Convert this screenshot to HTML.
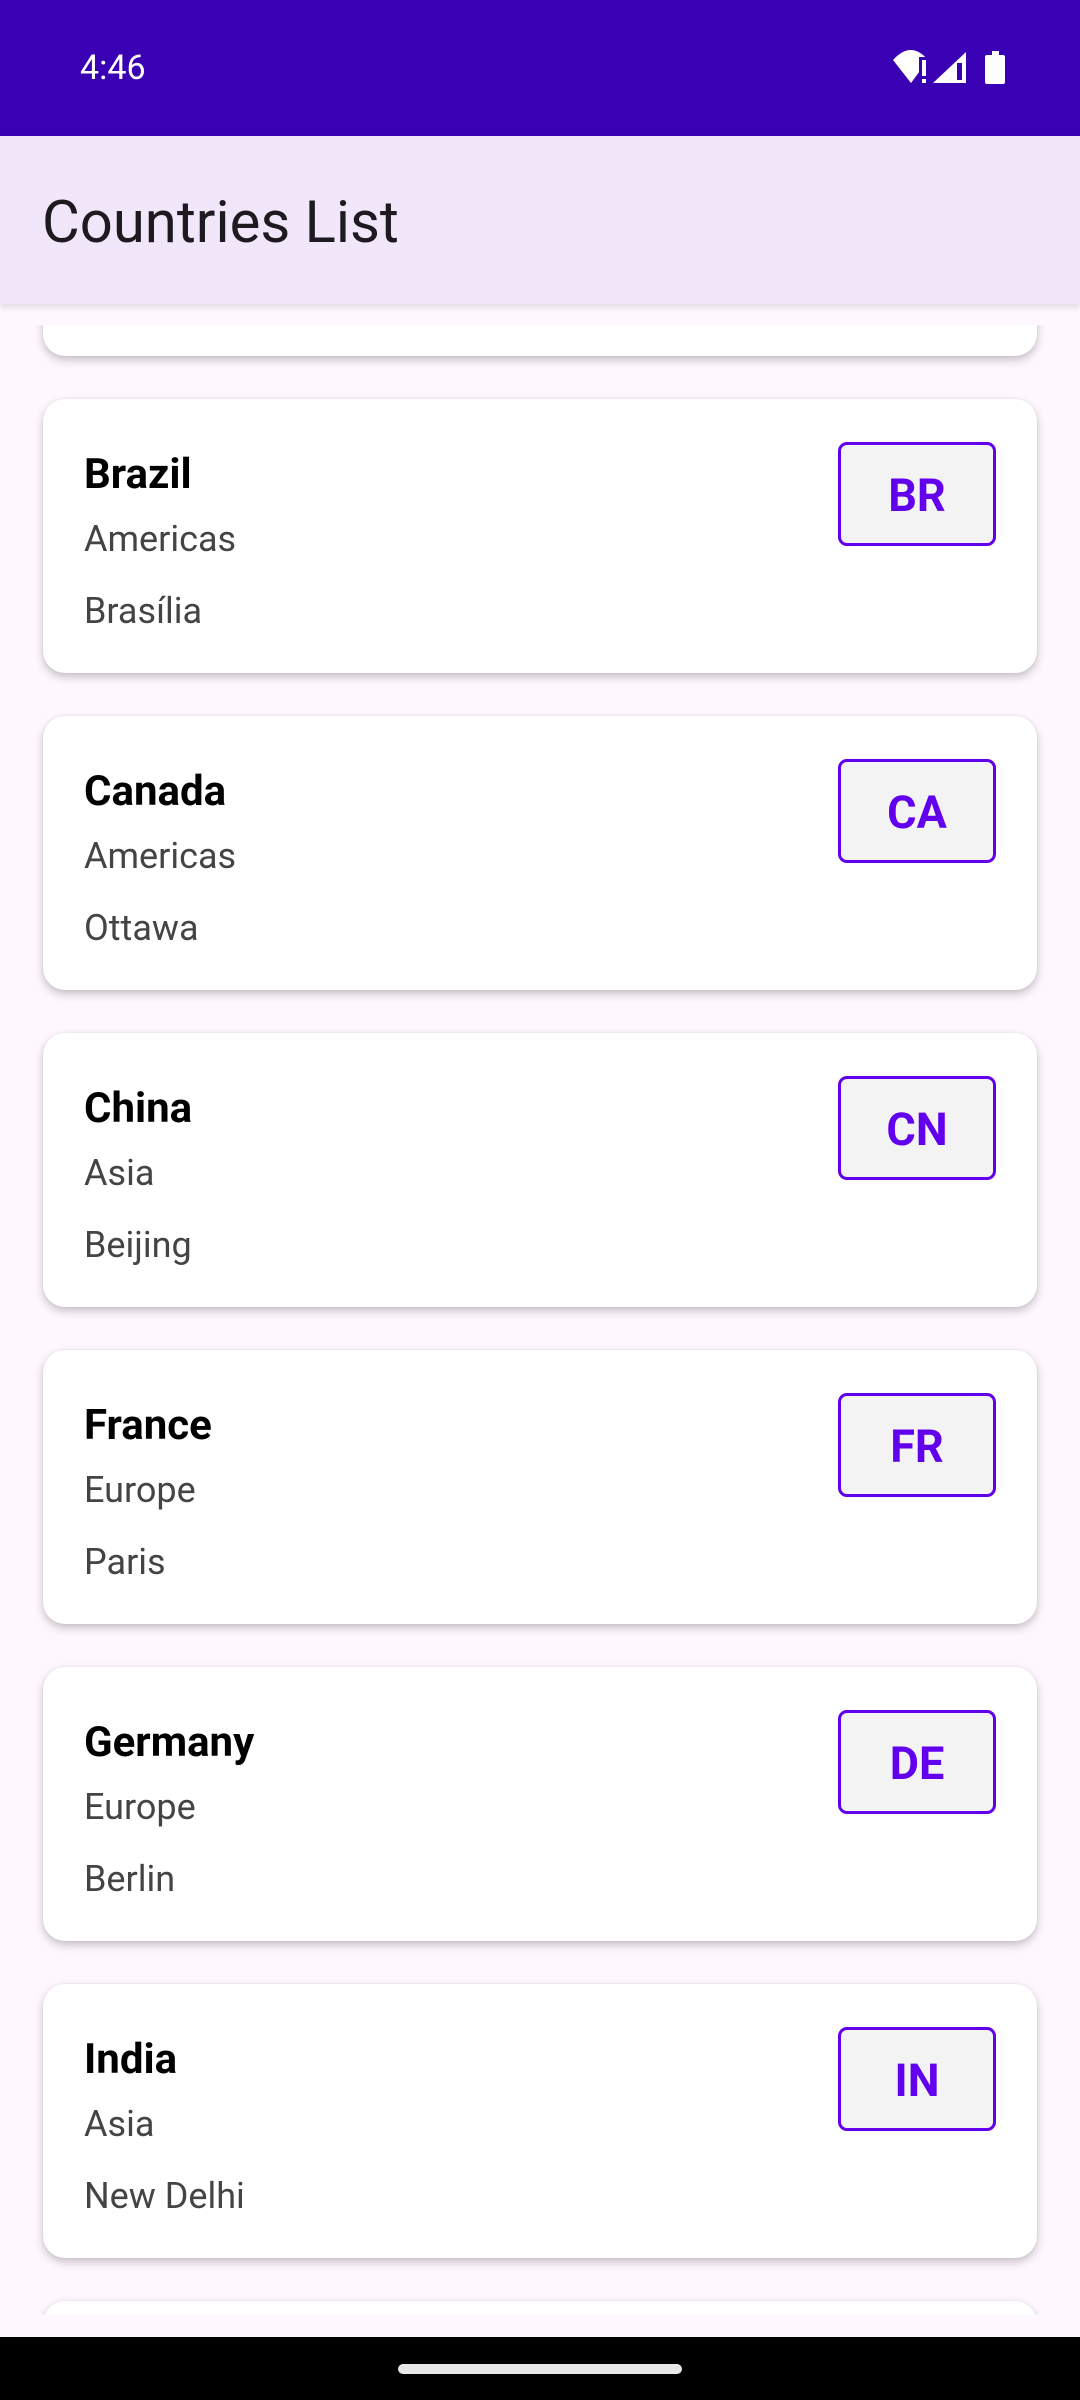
<!DOCTYPE html>
<html><head><meta charset="utf-8"><style>
*{margin:0;padding:0;box-sizing:border-box}
html,body{width:1080px;height:2400px;overflow:hidden}
body{background:#fef7fe;font-family:"Roboto","Liberation Sans",sans-serif;position:relative}
.sb{position:absolute;left:0;top:0;width:1080px;height:136px;background:#3a00b3}
.time{position:absolute;left:80px;top:48px;color:#fff;font-size:34px}
.ab{position:absolute;left:0;top:136px;width:1080px;height:168px;background:#f2e6fa;box-shadow:0 3px 6px rgba(0,0,0,0.12);z-index:5}
.ab span{position:absolute;left:42px;top:53px;font-size:58px;color:#1d1b20}
.list{position:absolute;left:0;top:325px;width:1080px;height:1990px;overflow:hidden}
.card{position:absolute;left:43px;width:994px;height:274px;background:#fff;border-radius:22px;box-shadow:0 4px 9px rgba(0,0,0,0.22),0 0 2px rgba(0,0,0,0.08)}
.n{position:absolute;left:41px;top:51px;font-size:42px;font-weight:bold;color:#000}
.r{position:absolute;left:41px;top:119px;font-size:36px;color:#444}
.c{position:absolute;left:41px;top:191px;font-size:36px;color:#444}
.code{position:absolute;left:795px;top:43px;width:158px;height:104px;border:3px solid #6200ee;border-radius:9px;background:#f3f3f3;color:#6200ee;font-weight:bold;font-size:45px;text-align:center;line-height:102px}
.nav{position:absolute;left:0;top:2337px;width:1080px;height:63px;background:#000}
.h{position:absolute;left:398px;top:2364px;width:284px;height:10px;border-radius:5px;background:#e8e8e8}
</style></head><body>
<div class="sb"><div class="time">4:46</div>
<svg style="position:absolute;left:0;top:0" width="1080" height="136">
<path d="M893 60 Q911 40 928 60 L911 83 Z" fill="#fff"/>
<rect x="919" y="57" width="11" height="28" fill="#3a00b3"/>
<rect x="922" y="60" width="4" height="16" fill="#fff"/><rect x="922" y="79" width="4" height="4" fill="#fff"/>
<path d="M933 83 L966 52 L966 83 Z" fill="#fff"/>
<rect x="957" y="63" width="5" height="17" fill="#3a00b3"/>
<rect x="985" y="55" width="20" height="29" rx="2" fill="#fff"/>
<rect x="992" y="51" width="7" height="5" fill="#fff"/>
</svg></div>
<div class="ab"><span>Countries List</span></div>
<div class="list">
<div class="card" style="top:-243px"></div>
<div class="card" style="top:74px"><div class="n">Brazil</div><div class="r">Americas</div><div class="c">Brasília</div><div class="code">BR</div></div>
<div class="card" style="top:391px"><div class="n">Canada</div><div class="r">Americas</div><div class="c">Ottawa</div><div class="code">CA</div></div>
<div class="card" style="top:708px"><div class="n">China</div><div class="r">Asia</div><div class="c">Beijing</div><div class="code">CN</div></div>
<div class="card" style="top:1025px"><div class="n">France</div><div class="r">Europe</div><div class="c">Paris</div><div class="code">FR</div></div>
<div class="card" style="top:1342px"><div class="n">Germany</div><div class="r">Europe</div><div class="c">Berlin</div><div class="code">DE</div></div>
<div class="card" style="top:1659px"><div class="n">India</div><div class="r">Asia</div><div class="c">New Delhi</div><div class="code">IN</div></div>
<div class="card" style="top:1976px"></div>
</div>
<div class="nav"></div><div class="h"></div>
</body></html>
